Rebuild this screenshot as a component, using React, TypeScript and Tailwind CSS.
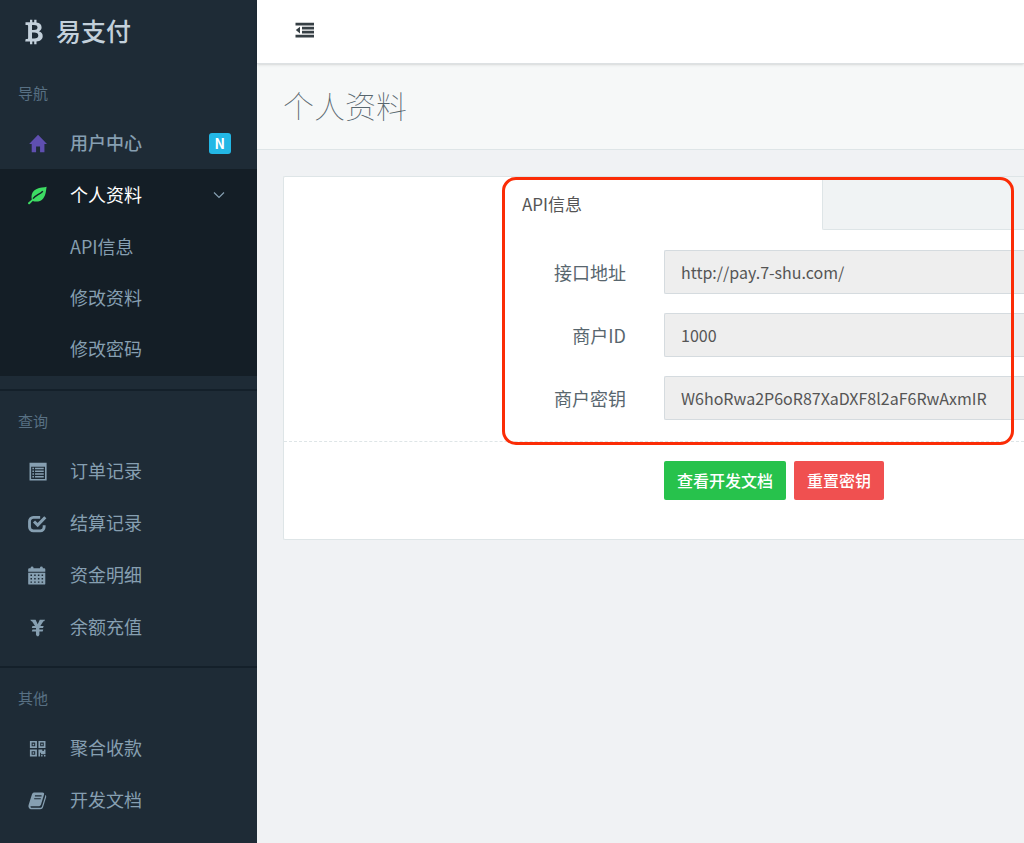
import type { ReactNode } from "react";

type IconName =
  | "home"
  | "leaf"
  | "list"
  | "check"
  | "calendar"
  | "yen"
  | "qrcode"
  | "book";

const ICONS: Record<IconName, ReactNode> = {
  home: (
    <path d="M10.600 .8 20 10.600H17.300V19.300H12.700V13.200H8.500V19.300H3.900V10.600H1.200Z" fill="currentColor" />
  ),
  leaf: (
    <>
      <path
        d="M19.600 .9C17 1.900 12.500 1.300 8.600 3.300 4.700 5.300 2.900 9 4 14.100 3 15.300 1.500 16.200 .3 17.400c-.4.500-.3 1 .1 1.500.5.500 1 .6 1.500.1 1.100-1.100 1.900-2.200 3.100-3.200 3.600 1.300 8.300.6 11-2.700C19 9.600 18.800 5 19.600 .9Z"
        fill="currentColor"
      />
      <path
        d="M5.300 13.300C8 9.300 11.800 9.300 15.600 5.400"
        fill="none"
        stroke="#141e26"
        strokeWidth="1.500"
      />
    </>
  ),
  list: (
    <>
      <path
        d="M1.600 .8h18v18.800h-18ZM3.300 4.900v13h14.600v-13Z"
        fill="currentColor"
        fillRule="evenodd"
      />
      <path
        d="M4.600 6.100h1.700v1.500H4.600ZM7.400 6.100h9.200v1.500H7.400ZM4.600 9h1.700v1.500H4.600ZM7.400 9h9.200v1.500H7.400ZM4.600 11.900h1.700v1.500H4.600ZM7.400 11.900h9.200v1.500H7.400ZM4.600 14.800h1.700v1.500H4.600ZM7.400 14.800h9.200v1.500H7.400Z"
        fill="currentColor"
      />
    </>
  ),
  check: (
    <>
      <path
        d="M12.800 3.500H5.600A4 4 0 0 0 1.600 7.500v6.300a4 4 0 0 0 4 4h7.400a4 4 0 0 0 4-4v-2"
        fill="none"
        stroke="currentColor"
        strokeWidth="3"
      />
      <path
        d="M6.300 7.900 10.200 11.600 18.200 3.400"
        fill="none"
        stroke="currentColor"
        strokeWidth="3.200"
      />
    </>
  ),
  calendar: (
    <>
      <path
        d="M.2 6V3.500a1.200 1.200 0 0 1 1.200-1.200h1.400V1.900a1.500 1.500 0 0 1 3 0v.4h6.800v-.4a1.500 1.500 0 0 1 3 0v.4h1.400a1.200 1.200 0 0 1 1.200 1.200V6Z"
        fill="currentColor"
      />
      <path
        d="M.2 7.200h18v11.400a1 1 0 0 1-1 1h-16a1 1 0 0 1-1-1ZM2.600 9v1.500h1.600V9Zm3.900 0v1.500h1.600V9Zm3.900 0v1.500H12V9Zm3.900 0v1.500h1.600V9ZM2.600 12.600v1.500h1.600v-1.500Zm3.900 0v1.500h1.600v-1.500Zm3.900 0v1.500H12v-1.500Zm3.900 0v1.500h1.600v-1.500ZM2.600 16.200v1.500h1.600v-1.500Zm3.900 0v1.500h1.600v-1.500Zm3.900 0v1.500H12v-1.500Zm3.900 0v1.500h1.600v-1.500Z"
        fill="currentColor"
        fillRule="evenodd"
      />
    </>
  ),
  yen: (
    <path
      d="M2.400 1.800H8L10.200 6.500 12.400 1.800H18L17 3.300H16.200L13 8.500H16.500L15.800 10.600H12V12H16.100L15.400 14.100H12V17.500L11 19.300H9.400L8.400 17.500V14.100H4L4.700 12H8.400V10.600H4L4.700 8.500H7.400L4.200 3.300H3.400Z"
      fill="currentColor"
    />
  ),
  qrcode: (
    <path
      d="M2 2h7.400v7.400H2Zm1.800 1.800v3.800h3.800V3.800ZM4.900 4.900h1.600v1.600H4.900ZM11 2h7.400v7.400H11Zm1.800 1.800v3.800h3.800V3.800Zm1.100 1.100h1.600v1.600h-1.600ZM2 11h7.400v7.400H2Zm1.800 1.800v3.800h3.800v-3.800Zm1.100 1.100h1.600v1.600H4.900ZM11 11h4.100v1.500h1.600V11h1.700v5h-4.700v-1.500h-1v3.900H11ZM13.800 16.900h1.500v1.500h-1.500ZM16.800 16.900h1.600v1.500h-1.600Z"
      fill="currentColor"
      fillRule="evenodd"
    />
  ),
  book: (
    <>
      <path
        d="M7 1.500h8.300c1.300 0 2 .9 1.600 2.200l-3.200 10.400c-.4 1.300-1.300 1.900-2.600 1.900H3.600c-1 0-1.300.6-.8 1.200.3.400.8.500 1.400.5h8.600c.9 0 1.600-.5 1.900-1.400L18 5.700c.2-.6.200-1 .1-1.400.9.400 1.300 1.200 1 2.200l-3.200 10.300c-.4 1.400-1.600 2.400-3.100 2.400H4.200c-1.900 0-3.400-1-3.700-2.700-.1-.8 0-1.600.3-2.400L4.200 3.400C4.700 2 5.500 1.500 7 1.500Z"
        fill="currentColor"
      />
      <path d="M7.300 5.200h7M6.500 8.100h7" stroke="#1e2b36" strokeWidth="1.200" />
    </>
  ),
};

function Icon({ name }: { name: IconName }) {
  return (
    <svg viewBox="0 0 20 20" className="size-[19px] shrink-0" aria-hidden="true">
      {ICONS[name]}
    </svg>
  );
}

function NavLabel({ children }: { children: ReactNode }) {
  return (
    <h2 className="mt-[18px] mb-3 pl-[18px] text-[15px] leading-6 text-[#587083]">
      {children}
    </h2>
  );
}

function NavItem({
  icon,
  label,
  tint = "",
  text = "",
  children,
}: {
  icon: IconName;
  label: string;
  tint?: string;
  text?: string;
  children?: ReactNode;
}) {
  return (
    <a href="#" className={`flex h-[52px] items-center pr-[26px] pl-7 ${text}`}>
      <span className={`flex w-[42px] ${tint}`}>
        <Icon name={icon} />
      </span>
      <span className="flex-1 pb-0.5">{label}</span>
      {children}
    </a>
  );
}

function Divider() {
  return <div className="mt-[13px] h-0.5 bg-[#14202a]" />;
}

function Sidebar() {
  return (
    <aside className="w-[257px] shrink-0 bg-[#1e2b36] text-[18px] text-[#869fb1]">
      <a
        href="#"
        className="flex h-[63px] items-center pl-6 text-[25px] font-medium text-[#c3d0db]"
      >
        <svg viewBox="0 0 20 26" className="mr-3 h-[26px] w-5" aria-hidden="true">
          <path
            d="M1.500 3.300H6V.7h2.300v2.600h1.900V.7h2.300v2.700c3.300.4 5.100 2 5.100 4.800 0 2-1 3.400-2.800 4.100 2.500.6 3.900 2.200 3.900 4.700 0 3.300-2.200 5.200-6.200 5.500v2.800h-2.300v-2.700H8.300v2.700H6v-2.700H1.200l.5-2.600h1.600c.6 0 .8-.3.800-.9V6.900c0-.7-.3-1-1.100-1H1.500ZM8 6v5h1.900c2.400 0 3.600-.8 3.600-2.500S12.300 6 9.900 6Zm0 7.500v6h2.200c2.700 0 4.100-1 4.100-3s-1.400-3-4.100-3Z"
            fill="currentColor"
            fillRule="evenodd"
          />
        </svg>
        <span className="pb-0.5">易支付</span>
      </a>

      <nav>
        <NavLabel>导航</NavLabel>
        <NavItem icon="home" label="用户中心" tint="text-[#5f4fb0]" text="font-medium">
          <span className="rounded-[3px] bg-[#23b7e5] px-1.5 text-[14px] leading-[21px] font-bold text-white">
            N
          </span>
        </NavItem>
        <div className="bg-[#141e26] pb-0.5">
          <NavItem icon="leaf" label="个人资料" tint="text-[#3ddc63]" text="text-white">
            <svg
              viewBox="0 0 12 8"
              className="mr-1.5 h-2 w-3 text-[#869fb1]"
              aria-hidden="true"
            >
              <path d="M1 1.500 6 6.500 11 1.500" fill="none" stroke="currentColor" strokeWidth="1.200" />
            </svg>
          </NavItem>
          {["API信息", "修改资料", "修改密码"].map((label) => (
            <a key={label} href="#" className="flex h-[51px] items-center pl-[70px]">
              {label}
            </a>
          ))}
        </div>

        <Divider />
        <NavLabel>查询</NavLabel>
        <NavItem icon="list" label="订单记录" />
        <NavItem icon="check" label="结算记录" />
        <NavItem icon="calendar" label="资金明细" />
        <NavItem icon="yen" label="余额充值" />

        <Divider />
        <NavLabel>其他</NavLabel>
        <NavItem icon="qrcode" label="聚合收款" />
        <NavItem icon="book" label="开发文档" />
      </nav>
    </aside>
  );
}

function Field({ id, label, value }: { id: string; label: string; value: string }) {
  return (
    <div className="flex items-center">
      <label htmlFor={id} className="w-[342px] shrink-0 text-right text-[18px]">
        {label}
      </label>
      <input
        id={id}
        type="text"
        readOnly
        value={value}
        className="ml-[38px] h-11 min-w-0 flex-1 rounded-l-[2px] border border-r-0 border-[#d5dbdf] bg-[#eeeeee] px-4 text-[16px] text-[#555555] outline-none"
      />
    </div>
  );
}

export default function App() {
  return (
    <div className="flex min-h-screen overflow-hidden bg-[#f0f2f4] font-['Noto_Sans_CJK_SC',sans-serif] text-[#58666e]">
      <Sidebar />

      <div className="min-w-0 flex-1">
        <header className="relative flex h-16 items-center border-b border-[#dde1e3] bg-white pl-[38px] shadow-sm">
          <button type="button" aria-label="收起菜单" className="pb-1 text-[#363f44]">
            <svg viewBox="0 0 20 16" className="h-4 w-5" aria-hidden="true">
              <path
                d="M.5 .8h18.500v2.600H.5ZM7 4.800h12v2.600H7ZM7 8.800h12v2.600H7ZM.5 12.800h18.500v2.600H.5ZM5 4.800v6.600L.8 8.100Z"
                fill="currentColor"
              />
            </svg>
          </button>
        </header>

        <div className="border-b border-[#dee5e7] bg-[#f6f8f8] px-[26px] pt-[19px] pb-[22px]">
          <h1 className="text-[31px] leading-[44px] font-thin text-[#58666e]">个人资料</h1>
        </div>

        <main className="pt-[26px] pl-[26px]">
          <section className="relative rounded-l-[2px] border border-r-0 border-[#dee5e7] bg-white pb-[39px]">
            <div className="flex h-[53px] pl-[219px]">
              <button type="button" className="w-[319px] shrink-0 pl-[19px] text-left text-[17px] text-[#555555]">
                API信息
              </button>
              <div className="flex-1 rounded-bl-[2px] border-b border-l border-[#dee5e7] bg-[#f0f3f4]" />
            </div>

            <form>
              <div className="flex flex-col gap-[19px] pt-5 pb-[21px]">
                <Field id="endpoint" label="接口地址" value="http://pay.7-shu.com/" />
                <Field id="merchant-id" label="商户ID" value="1000" />
                <Field id="merchant-key" label="商户密钥" value="W6hoRwa2P6oR87XaDXF8l2aF6RwAxmIR" />
              </div>
              <div className="flex gap-2 border-t border-dashed border-[#dee5e7] pt-[19px] pl-[380px] text-[16px] font-medium text-white">
                <button type="button" className="h-[39px] rounded-[2px] bg-[#27c24c] px-[13px] pb-0.5">
                  查看开发文档
                </button>
                <button type="button" className="h-[39px] rounded-[2px] bg-[#f05050] px-[13px] pb-0.5">
                  重置密钥
                </button>
              </div>
            </form>

            <div className="pointer-events-none absolute top-0 right-2.5 left-[218px] h-[268px] rounded-[14px] border-[3px] border-[#fb2c06]" />
          </section>
        </main>
      </div>
    </div>
  );
}
